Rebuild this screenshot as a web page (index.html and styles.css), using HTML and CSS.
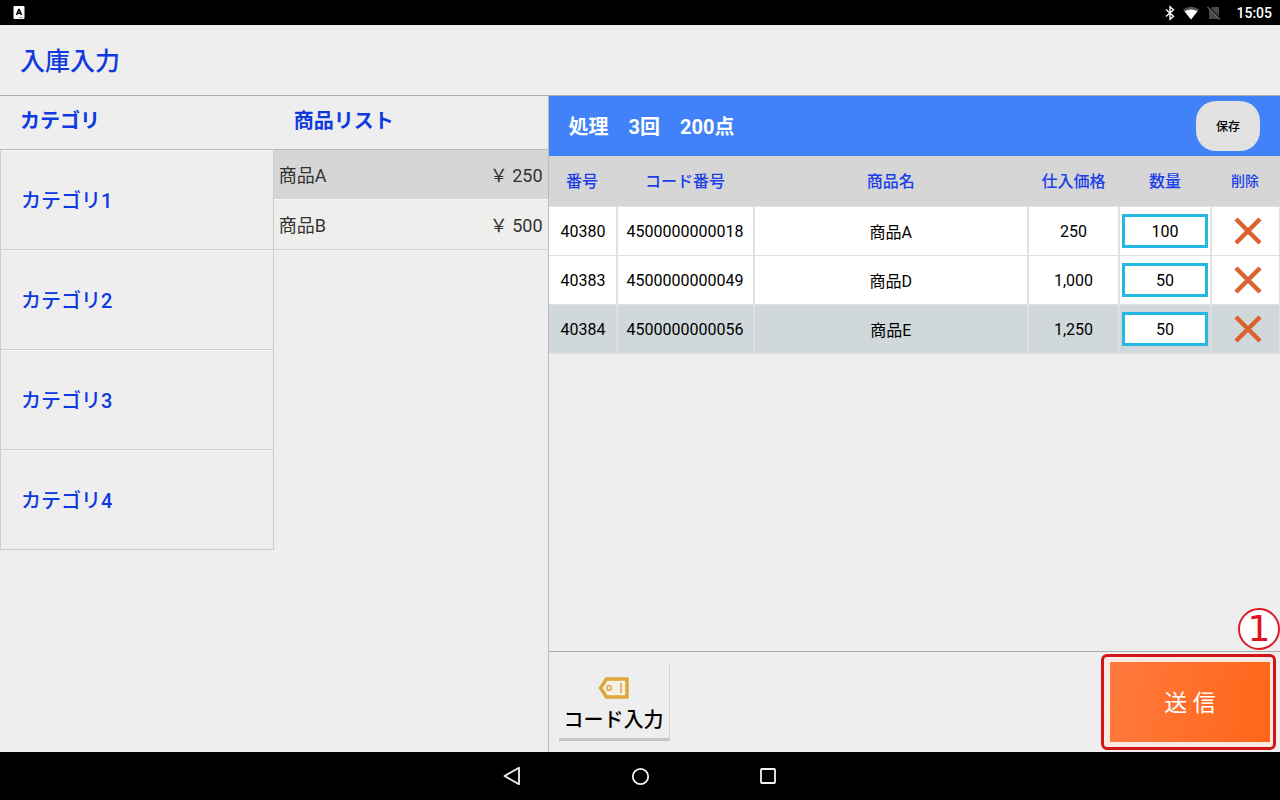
FILE: index.html
```html
<!DOCTYPE html>
<html lang="ja">
<head>
<meta charset="utf-8">
<meta name="viewport" content="width=device-width, initial-scale=1">
<title>入庫入力</title>
<link rel="stylesheet" href="styles.css">
</head>
<body>
<div class="screen">
  <div class="status-bar">
    <svg class="status-app" width="12" height="13" viewBox="0 0 12 13" aria-hidden="true">
      <rect x="0.5" y="0" width="11" height="13" rx="1" fill="#fff"/>
      <path d="M3.5 9 5.7 3.6h.6L8.500 9M4.300 7.200h3.400" fill="none" stroke="#000" stroke-width="1.500"/>
      <path d="M6 11.500h4" stroke="#999" stroke-width="1"/>
    </svg>
    <div class="status-icons">
      <svg width="10" height="16" viewBox="0 0 10 16" aria-hidden="true"><path d="M1 4.500 8.500 11.200 5 14.300V1.700L8.500 4.800 1 11.500" fill="none" stroke="#fff" stroke-width="1.400"/></svg>
      <svg width="16" height="14" viewBox="0 0 16 14" aria-hidden="true"><path d="M0 3.500Q8-2 16 3.500L8 13.500Z" fill="#555"/><path d="M1.500 5.200Q8 2 14.500 5.200L8 13.500Z" fill="#fff"/></svg>
      <svg width="14" height="14" viewBox="0 0 14 14" aria-hidden="true"><path d="M5 1h7v12H2V4Z" fill="#4a4a4a"/><path d="M1 .5 13.500 13" stroke="#000" stroke-width="1.600"/><path d="M.5 1 13 13.500" stroke="#666" stroke-width="1.200"/></svg>
    </div>
    <span class="clock">15:05</span>
  </div>

  <header class="page-header"><h1 class="page-title">入庫入力</h1></header>

  <main class="main">
    <section class="picker">
      <h2 class="picker-heading">カテゴリ</h2>
      <h2 class="picker-heading">商品リスト</h2>
      <div class="categories">
        <button class="category" type="button">カテゴリ1</button>
        <button class="category" type="button">カテゴリ2</button>
        <button class="category" type="button">カテゴリ3</button>
        <button class="category" type="button">カテゴリ4</button>
      </div>
      <div class="products">
        <button class="product product-selected" type="button"><span>商品A</span><span>￥ 250</span></button>
        <button class="product" type="button"><span>商品B</span><span>￥ 500</span></button>
      </div>
    </section>

    <section class="entry">
      <div class="summary">
        <p class="summary-text">処理　3回　200点</p>
        <button class="save" type="button">保存</button>
      </div>
      <div class="table-area">
        <table class="items">
          <colgroup><col class="col-no"><col class="col-code"><col class="col-name"><col class="col-price"><col class="col-qty"><col class="col-del"></colgroup>
          <thead>
            <tr><th>番号</th><th>コード番号</th><th>商品名</th><th>仕入価格</th><th>数量</th><th class="head-del">削除</th></tr>
          </thead>
          <tbody>
            <tr>
              <td>40380</td><td>4500000000018</td><td>商品A</td><td>250</td>
              <td class="cell-qty"><input class="qty" type="text" inputmode="numeric" value="100" aria-label="商品Aの数量"></td>
              <td class="cell-del"><button class="delete" type="button" aria-label="商品Aを削除"><svg width="28" height="28" viewBox="0 0 28 28"><path d="M2 2 26 26M26 2 2 26" stroke="#d9622f" stroke-width="4.500"/></svg></button></td>
            </tr>
            <tr>
              <td>40383</td><td>4500000000049</td><td>商品D</td><td>1,000</td>
              <td class="cell-qty"><input class="qty" type="text" inputmode="numeric" value="50" aria-label="商品Dの数量"></td>
              <td class="cell-del"><button class="delete" type="button" aria-label="商品Dを削除"><svg width="28" height="28" viewBox="0 0 28 28"><path d="M2 2 26 26M26 2 2 26" stroke="#d9622f" stroke-width="4.500"/></svg></button></td>
            </tr>
            <tr class="row-selected">
              <td>40384</td><td>4500000000056</td><td>商品E</td><td>1,250</td>
              <td class="cell-qty"><input class="qty" type="text" inputmode="numeric" value="50" aria-label="商品Eの数量"></td>
              <td class="cell-del"><button class="delete" type="button" aria-label="商品Eを削除"><svg width="28" height="28" viewBox="0 0 28 28"><path d="M2 2 26 26M26 2 2 26" stroke="#d9622f" stroke-width="4.500"/></svg></button></td>
            </tr>
          </tbody>
        </table>
      </div>
      <div class="actions">
        <button class="code-entry" type="button">
          <svg class="tag-icon" width="32" height="24" viewBox="0 0 32 24" aria-hidden="true">
            <path d="M8.500 3H29V21H8.500L2.500 12Z" fill="#f4eee4" stroke="#dda63a" stroke-width="3.400"/>
            <circle cx="11" cy="12" r="2.200" fill="none" stroke="#dda63a" stroke-width="1.500"/>
            <path d="M23 7v10" stroke="#dda63a" stroke-width="1.500"/>
          </svg>
          <span>コード入力</span>
        </button>
        <div class="send-frame">
          <button class="send" type="button">送 信</button>
          <span class="step-badge">1</span>
        </div>
      </div>
    </section>
  </main>

  <nav class="nav-bar" aria-label="システム">
    <button class="nav-key" type="button" aria-label="戻る"><svg width="20" height="20" viewBox="0 0 20 20"><path d="M17 1.800V18.200L2.500 10Z" fill="none" stroke="#f2f2f2" stroke-width="1.800" stroke-linejoin="round"/></svg></button>
    <button class="nav-key" type="button" aria-label="ホーム"><svg width="20" height="20" viewBox="0 0 20 20"><circle cx="10.500" cy="10.500" r="7.700" fill="none" stroke="#f2f2f2" stroke-width="1.800"/></svg></button>
    <button class="nav-key" type="button" aria-label="履歴"><svg width="20" height="20" viewBox="0 0 20 20"><rect x="3" y="3" width="14" height="14" rx="1" fill="none" stroke="#f2f2f2" stroke-width="1.800"/></svg></button>
  </nav>
</div>
</body>
</html>
```
FILE: styles.css
```css
* {
  box-sizing: border-box;
}

body {
  margin: 0;
  background: #eee;
  color: #111;
  font-family: Roboto, "Noto Sans CJK JP", sans-serif;
  font-size: 16px;
}

h1,
h2,
p {
  margin: 0;
}

button,
input {
  font: inherit;
  color: inherit;
  margin: 0;
  padding: 0;
  border: 0;
  border-radius: 0;
  background: none;
}

.screen {
  display: flex;
  flex-direction: column;
  min-height: 100vh;
}

.status-bar {
  display: flex;
  align-items: center;
  height: 25px;
  padding: 0 8px 0 13px;
  background: #000;
  color: #fff;
}

.status-icons {
  display: flex;
  align-items: center;
  gap: 8px;
  margin-left: auto;
}

.clock {
  margin-left: 15px;
  font-size: 14px;
  font-weight: 500;
}

.page-header {
  display: flex;
  align-items: center;
  height: 71px;
  padding: 0 20px 2px;
  border-bottom: 1px solid #aaa;
}

.page-title {
  color: #0f3ae0;
  font-size: 25px;
  font-weight: 500;
}

.main {
  display: grid;
  grid-template-columns: 3fr 4fr;
  flex: 1;
}

.picker {
  display: grid;
  grid-template-columns: 1fr 1fr;
  grid-template-rows: 54px 1fr;
  border-right: 1px solid #bbb;
}

.picker-heading {
  padding: 10px 20px 0;
  border-bottom: 1px solid #bbb;
  color: #0f3ae0;
  font-size: 20px;
  font-weight: 700;
  line-height: 30px;
}

.category {
  display: block;
  width: 100%;
  height: 100px;
  padding: 0 0 2px 20px;
  border: 1px solid #ccc;
  border-top-color: #f8f8f8;
  color: #0f3ae0;
  font-size: 20px;
  font-weight: 500;
  text-align: left;
}

.product {
  display: flex;
  align-items: center;
  justify-content: space-between;
  width: 100%;
  height: 50px;
  padding: 0 5px 2px;
  border-bottom: 1px solid #d6d6d6;
  background: #eeeeec;
  color: #333;
  font-size: 18px;
}

.product-selected {
  border-bottom-color: #f8f8f8;
  background: #d6d6d6;
}

.entry {
  display: flex;
  flex-direction: column;
}

.summary {
  display: flex;
  align-items: center;
  justify-content: space-between;
  height: 60px;
  padding: 0 20px;
  background: #4182f8;
}

.summary-text {
  padding-bottom: 2px;
  color: #fff;
  font-size: 20px;
  font-weight: 700;
}

.save {
  width: 64px;
  height: 50px;
  padding-bottom: 2px;
  border-radius: 20px;
  background: #e1e1e1;
  color: #000;
  font-size: 12px;
  font-weight: 500;
}

.table-area {
  flex: 1;
}

.items {
  width: 100%;
  border-collapse: separate;
  border-spacing: 0;
  table-layout: fixed;
}

.col-no {
  width: 69px;
}

.col-code {
  width: 137px;
}

.col-price {
  width: 91px;
}

.col-qty {
  width: 92px;
}

.col-del {
  width: 68px;
}

.items th {
  height: 51px;
  padding: 0 2px 2px 0;
  border-bottom: 1px solid #e0e0e0;
  background: #d6d6d6;
  color: #1a3fe8;
  font-weight: 500;
}

.items .head-del {
  font-size: 14px;
}

.items td {
  height: 49px;
  padding: 0;
  border-right: 2px solid #e0e0e0;
  border-bottom: 1px solid #e0e0e0;
  background: #fff;
  color: #000;
  text-align: center;
}

.items td:first-child {
  padding-left: 2px;
}

.items td:last-child {
  border-right-width: 1px;
}

.items .row-selected td {
  background: #d0d8dc;
}

.items .cell-qty {
  padding: 0 2px;
}

.items .cell-del {
  padding-left: 5px;
}

.qty {
  display: block;
  width: 100%;
  height: 34px;
  border: 3px solid #24b8e2;
  background: #fff;
  text-align: center;
}

.delete {
  display: block;
  margin: 0 auto;
}

.delete svg {
  display: block;
}

.actions {
  display: flex;
  align-items: center;
  justify-content: space-between;
  height: 101px;
  padding: 0 4px 0 10px;
  border-top: 1px solid #aaa;
}

.code-entry {
  display: flex;
  flex-direction: column;
  align-items: center;
  gap: 2px;
  width: 111px;
  height: 77px;
  padding-top: 12px;
  border-right: 1px solid #d4d4d4;
  border-bottom: 3px solid #c6c6c6;
  color: #000;
  font-size: 20px;
  font-weight: 500;
  line-height: 36px;
}

.tag-icon {
  flex-shrink: 0;
}

.send-frame {
  position: relative;
  padding: 5px 3px 5px 6px;
  border: 3px solid #d01616;
  border-radius: 6px;
  background: #fbe9e4;
}

.send {
  display: block;
  width: 160px;
  height: 80px;
  padding-bottom: 2px;
  background: linear-gradient(100deg, #ff7a3e, #ff6518);
  color: #fff;
  font-size: 23px;
}

.step-badge {
  position: absolute;
  right: -7px;
  bottom: 100%;
  width: 42px;
  height: 42px;
  margin-bottom: 7px;
  border: 2px solid #dc1a24;
  border-radius: 50%;
  background: #fff;
  color: #e01020;
  font-family: "DejaVu Sans", sans-serif;
  font-size: 36px;
  line-height: 38px;
  text-align: center;
}

.nav-bar {
  display: flex;
  align-items: center;
  justify-content: center;
  gap: 80px;
  height: 48px;
  background: #000;
}

.nav-key {
  display: grid;
  place-items: center;
  width: 48px;
  height: 48px;
}
```
